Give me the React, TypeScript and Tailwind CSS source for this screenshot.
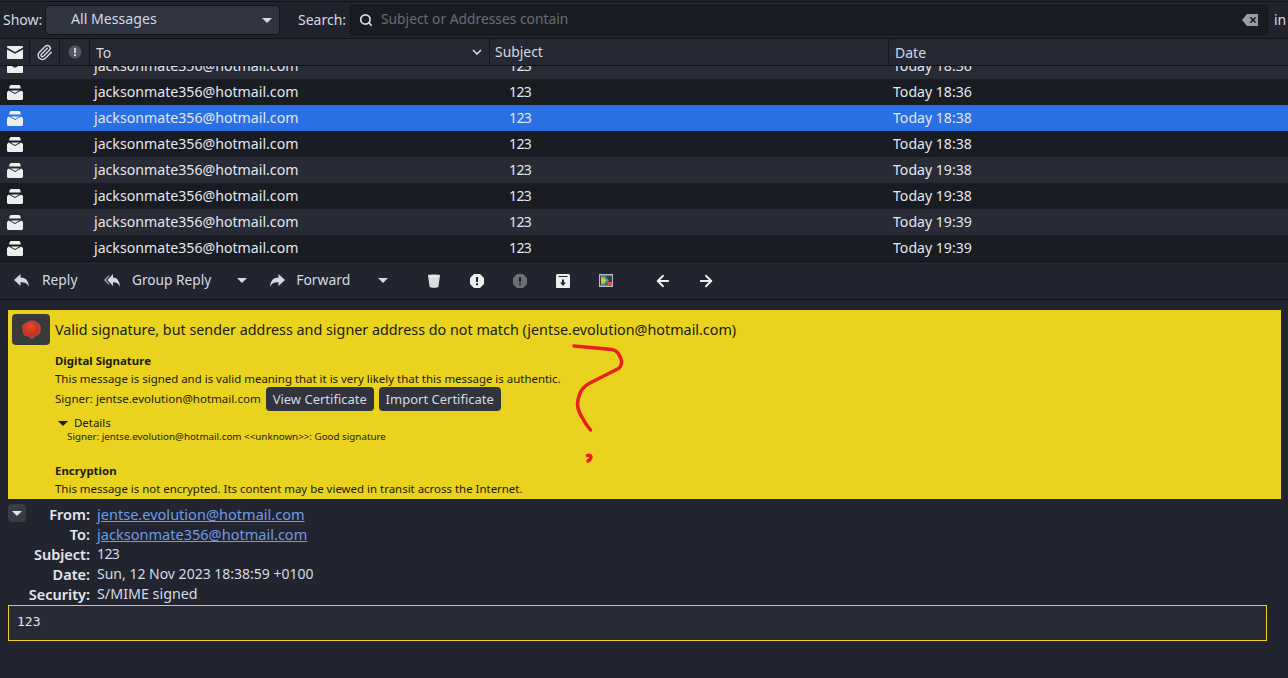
import { ArrowLeft, ArrowRight, Paperclip, Search } from 'lucide-react';

const messages = [
  { date: 'Today 18:36', tone: 'bg-[#282b36]', closed: true },
  { date: 'Today 18:36', tone: 'bg-[#191c23]' },
  { date: 'Today 18:38', tone: 'bg-[#2970e4]' },
  { date: 'Today 18:38', tone: 'bg-[#191c23]' },
  { date: 'Today 19:38', tone: 'bg-[#282b36]' },
  { date: 'Today 19:38', tone: 'bg-[#191c23]' },
  { date: 'Today 19:39', tone: 'bg-[#282b36]' },
  { date: 'Today 19:39', tone: 'bg-[#191c23]' },
];

function Caret({ className = 'fill-[#d3dae3]' }: { className?: string }) {
  return (
    <svg width="10" height="5" viewBox="0 0 10 5" className={className}>
      <path d="M0 0h10L5 5z" />
    </svg>
  );
}

function ClosedMail() {
  return (
    <svg width="16" height="13" viewBox="0 0 16 13" className="fill-[#eeeeee]">
      <path d="M1 0h14c.6 0 1 .4 1 1v.6L8 6 0 1.600V1c0-.6.4-1 1-1zM0 3.400l8 4.400 8-4.400V12c0 .6-.4 1-1 1H1c-.6 0-1-.4-1-1z" />
    </svg>
  );
}

function ReadMail() {
  return (
    <svg width="16" height="15" viewBox="0 0 16 15" className="fill-[#eeeeee]">
      <path d="M4.500 0h7c1 0 1.800.7 2 1.700L13.800 3.500H2.200L2.500 1.700C2.700.7 3.500 0 4.500 0z" />
      <path d="M0 7 1.800 5.500 8 9l6.200-3.500L16 7v6.500c0 .8-.7 1.500-1.500 1.500h-13C.7 15 0 14.300 0 13.500z" />
      <path d="M3.500 5.500h9L8 8z" />
    </svg>
  );
}

function ReplyIcon({ flip = false }: { flip?: boolean }) {
  return (
    <svg width="15" height="13" viewBox="0 0 15 13" className={`fill-[#d3dae3] ${flip ? '-scale-x-100' : ''}`}>
      <path d="M6.500 0v3.500c5 0 8 3 8.500 9.500-1.500-3.500-4-4.800-8.500-4.800V12L0 6z" />
    </svg>
  );
}

function GroupReplyIcon() {
  return (
    <svg width="16" height="13" viewBox="0 0 16 13" className="fill-[#d3dae3]">
      <path d="M9 0v3.500c4 0 6.500 3 7 9.500-1.300-3.500-3.500-4.800-7-4.800V12L3.500 6z" />
      <path d="M5 1 0 6l5 5V9.500L2 6l3-3.500z" opacity=".75" />
    </svg>
  );
}

function Seal() {
  return (
    <svg width="22" height="22" viewBox="0 0 22 22">
      <defs>
        <radialGradient id="wax" cx="0.45" cy="0.35" r="0.7">
          <stop offset="0" stopColor="#e8452a" />
          <stop offset="1" stopColor="#c02c18" />
        </radialGradient>
      </defs>
      <path d="M7 3C9.500 1.500 13 1 15.500 2.200 18 3.300 20.300 5 20.700 8c.3 2 .3 3.500-.5 5.500-.8 2-2.800 2.600-4.500 3.700-1.300.9-2.300 3-4 2.800-1.300-.2-1.700-1.800-3.200-2.300-2-.6-3.800-.6-5-2.500-.9-1.500-.5-3-1-4.500C2 8.700 1.300 7.300 2.700 5.800 4 4.400 5.500 4 7 3z" fill="#9c5246" />
      <ellipse cx="11.300" cy="10" rx="8" ry="7.500" fill="url(#wax)" />
    </svg>
  );
}

function ActionIcon({ kind }: { kind: string }) {
  if (kind === 'trash') {
    return (
      <svg width="14" height="14" viewBox="0 0 14 14">
        <path d="M1 1C3 .2 11 .2 13 1L11.500 12.500c-.3 1.800-8.700 1.800-9 0z" fill="#dcdcdc" />
        <path d="M1.500 2c3 .8 8 .8 11 0" stroke="#f2f2f2" strokeWidth="1" fill="none" />
      </svg>
    );
  }
  if (kind === 'junk' || kind === 'notjunk') {
    return (
      <svg width="14" height="14" viewBox="0 0 14 14">
        <path
          d="M4 0h6l4 4v6l-4 4H4l-4-4V4zM6 3v5h2V3zM6 9.200v2h2v-2z"
          fillRule="evenodd"
          fill={kind === 'junk' ? '#eeeeee' : '#6f7076'}
        />
      </svg>
    );
  }
  if (kind === 'archive') {
    return (
      <svg width="14" height="14" viewBox="0 0 14 14">
        <path d="M1.500 0h11c.8 0 1.500.7 1.500 1.500V13c0 .6-.4 1-1 1H1c-.6 0-1-.4-1-1V1.500C0 .7.700 0 1.500 0zM2.500 2v1h9V2zM6 5.500v3H4L7 12l3-3.500H8v-3z" fillRule="evenodd" fill="#eeeeee" />
      </svg>
    );
  }
  return (
    <svg width="14" height="13" viewBox="0 0 14 13">
      <rect width="14" height="13" fill="#b9bcc4" />
      <rect x="1" y="1.500" width="12" height="10" fill="#3a3d46" />
      <path d="M2 2h4l4 4.500L6 11H2z" fill="#26a69a" />
      <path d="M2 3.500h2.500L7.500 6.500 4.500 9.500H2z" fill="#f0b429" />
      <path d="M9 8h4v3.500H7z" fill="#e5484d" />
    </svg>
  );
}

export default function App() {
  return (
    <div className="flex h-[678px] w-[1288px] flex-col overflow-hidden bg-[#22252f] font-['Noto_Sans',sans-serif] text-[14px] text-[#d3dae3]">
      {/* filter bar */}
      <div className="mt-[1px] flex h-[38px] shrink-0 items-center border-y border-[#111318] bg-[#20232c]">
        <span className="mb-[2px] ml-[3px] w-[42px]">Show:</span>
        <div className="flex h-[30px] w-[235px] items-center justify-between rounded-[4px] border border-[#14161c] bg-[#303340] pl-[25px] pr-[7px]">
          <span className="mb-[2px] text-[14.150px]">All Messages</span>
          <Caret />
        </div>
        <span className="mb-[2px] ml-[18px] w-[52px]">Search:</span>
        <div className="flex h-[30px] w-[918px] items-center rounded-[4px] border border-[#111318] bg-[#1a1c23] pl-[8px] pr-[9px]">
          <Search size={14} strokeWidth={3} className="text-[#d3dae3]" />
          <span className="mb-[2px] ml-[8px] text-[13.800px] text-[#6a6d76]">Subject or Addresses contain</span>
          <svg width="16" height="12" viewBox="0 0 16 12" className="ml-auto fill-[#9b9da3]">
            <path d="M5 0h11v12H5L0 6zM7.500 3.200 9.800 6 7.500 8.800h2L11 7l1.500 1.800h2L12.200 6l2.300-2.800h-2L11 5 9.500 3.200z" fillRule="evenodd" />
          </svg>
        </div>
        <span className="mb-[2px] ml-[6px]">in</span>
      </div>

      {/* column headers */}
      <div className="flex h-[27px] shrink-0 items-center border-b border-[#111318] bg-[#262933]">
        <div className="flex h-full w-[30px] items-center justify-center border-r border-[#15171d]">
          <ClosedMail />
        </div>
        <div className="flex h-full w-[30px] items-center justify-center border-r border-[#15171d]">
          <Paperclip size={17} className="text-[#d3dae3]" />
        </div>
        <div className="flex h-full w-[30px] items-center justify-center border-r border-[#15171d]">
          <svg width="14" height="14" viewBox="0 0 14 14">
            <circle cx="7" cy="7" r="6.500" fill="#555862" />
            <path d="M6 3h2v5H6zM6 9h2v2H6z" fill="#cfd1d6" />
          </svg>
        </div>
        <div className="flex h-full w-[400px] items-center justify-between border-r border-[#15171d] pl-[6px] pr-[7px]">
          <span>To</span>
          <svg width="10" height="6" viewBox="0 0 10 6" fill="none" stroke="#d3dae3" strokeWidth="1.500">
            <path d="M1 1l4 4 4-4" />
          </svg>
        </div>
        <div className="flex h-full w-[399px] items-center border-r border-[#15171d] pl-[5px] text-[13.900px]">Subject</div>
        <div className="flex h-full items-center pl-[6px]">Date</div>
      </div>

      {/* message list, scrolled so the first row is cut off */}
      <div className="flex h-[195px] shrink-0 flex-col justify-end overflow-hidden">
        {messages.map((m, i) => (
          <div key={i} className={`flex h-[26px] shrink-0 items-center text-[#e4e7ec] ${m.tone}`}>
            <div className="flex w-[30px] justify-center">{m.closed ? <ClosedMail /> : <ReadMail />}</div>
            <div className="w-[64px]" />
            <div className="mb-[1px] w-[415px] text-[14.150px]">jacksonmate356@hotmail.com</div>
            <div className="mb-[1px] w-[384px] tracking-[-0.6px]">123</div>
            <div className="mb-[1px] text-[14.100px]">{m.date}</div>
          </div>
        ))}
      </div>

      {/* message actions */}
      <div className="flex h-[39px] shrink-0 items-center border-y border-[#111318] bg-[#22252f]">
        <div className="ml-[14px] flex w-[90px] items-center">
          <ReplyIcon />
          <span className="mb-[1px] ml-[13px] text-[13.800px]">Reply</span>
        </div>
        <GroupReplyIcon />
        <span className="mb-[1px] ml-[12px] text-[13.700px]">Group Reply</span>
        <Caret className="ml-[26px] fill-[#d3dae3]" />
        <div className="ml-[23px]">
          <ReplyIcon flip />
        </div>
        <span className="mb-[1px] ml-[11px] text-[13.900px]">Forward</span>
        <Caret className="ml-[28px] fill-[#d3dae3]" />
        <div className="ml-[39px] flex w-[186px] items-center justify-between">
          <ActionIcon kind="trash" />
          <ActionIcon kind="junk" />
          <ActionIcon kind="notjunk" />
          <ActionIcon kind="archive" />
          <ActionIcon kind="other" />
        </div>
        <ArrowLeft size={18} strokeWidth={2.500} className="ml-[41px] text-[#eeeeee]" />
        <ArrowRight size={18} strokeWidth={2.500} className="ml-[25px] text-[#eeeeee]" />
      </div>

      {/* signature banner */}
      <div className="relative mx-[8px] mt-[10px] h-[189px] w-[1273px] shrink-0 bg-[#e9d31f] pl-[4px] pt-[4px] text-[#1c1a08]">
        <div className="flex items-center">
          <div className="flex h-[31px] w-[38px] items-center justify-center rounded-[4px] bg-[#3a3a3a]">
            <Seal />
          </div>
          <span className="ml-[5px] text-[14.330px] leading-[20px]">
            Valid signature, but sender address and signer address do not match (jentse.evolution@hotmail.com)
          </span>
        </div>
        <div className="ml-[43px] mt-[7px] text-[11.450px] leading-[18px]">
          <div className="font-bold">Digital Signature</div>
          <div>This message is signed and is valid meaning that it is very likely that this message is authentic.</div>
          <div className="mt-[-1px] flex h-[24px] items-center">
            <span className="text-[11.550px]">Signer: jentse.evolution@hotmail.com</span>
            <span className="ml-[5px] flex h-[24px] w-[108px] items-center justify-center rounded-[4px] bg-[#31343c] text-[13px] text-[#d3dae3]">
              View Certificate
            </span>
            <span className="ml-[5px] flex h-[24px] w-[122px] items-center justify-center rounded-[4px] bg-[#31343c] text-[13px] text-[#d3dae3]">
              Import Certificate
            </span>
          </div>
          <div className="ml-[3px] mt-[3px] flex h-[18px] items-center">
            <Caret className="fill-[#1c1a08]" />
            <span className="ml-[6px]">Details</span>
          </div>
          <div className="ml-[12px] text-[9.800px] leading-[10px]">
            Signer: jentse.evolution@hotmail.com &lt;&lt;unknown&gt;&gt;: Good signature
          </div>
          <div className="mt-[20px] font-bold">Encryption</div>
          <div>This message is not encrypted. Its content may be viewed in transit across the Internet.</div>
        </div>
        {/* hand drawn question mark on the screenshot */}
        <svg width="60" height="125" viewBox="0 0 60 125" fill="none" className="absolute left-[561px] top-[34px]">
          <path
            d="M5 2 43 5.500C46 6 47.500 7 49 9 51.500 13 53 16 52.500 19 52 22 51 23.500 49.500 24.500L20 39.500C16 42 13 45 11.500 48 9.500 53 8.500 57 8.500 61 9 67 11 70 13.500 74 16 79 19 83 21.500 86"
            stroke="#ea2020"
            strokeWidth="3.500"
            strokeLinecap="round"
            strokeLinejoin="round"
          />
          <path d="M18.500 111.500c2-.5 3.500.5 3.500 1.500 0 1.500-1.500 3-3 4" stroke="#ea2020" strokeWidth="3.500" strokeLinecap="round" />
        </svg>
      </div>

      {/* mail headers */}
      <div className="relative h-[106px] shrink-0 pt-[5px] text-[14px] leading-[20px]">
        <div className="absolute left-[8px] top-[5px] flex h-[18px] w-[18px] items-center justify-center rounded-[4px] bg-[#3a3c44]">
          <Caret className="fill-[#e4e4e4]" />
        </div>
        {[
          ['From:', 'jentse.evolution@hotmail.com', true, 'text-[14.560px]'],
          ['To:', 'jacksonmate356@hotmail.com', true, 'text-[14.550px]'],
          ['Subject:', '123', false, 'tracking-[-0.6px]'],
          ['Date:', 'Sun, 12 Nov 2023 18:38:59 +0100', false, 'text-[14px]'],
          ['Security:', 'S/MIME signed', false, 'text-[14.300px]'],
        ].map(([label, value, link, size]) => (
          <div key={label as string} className="flex h-[20px]">
            <div className="w-[90px] text-right text-[14.500px] font-semibold text-[#e4e7ec]">{label}</div>
            <div className={`ml-[7px] ${size} ${link ? 'text-[#6d9ce8] underline' : 'text-[#d3dae3]'}`}>{value}</div>
          </div>
        ))}
      </div>

      {/* body */}
      <div className="ml-[8px] flex h-[36px] w-[1259px] shrink-0 items-center border border-[#e9d31f] bg-[#282a35] pb-[2px] pl-[8px] font-['DejaVu_Sans_Mono',monospace] text-[13px] text-[#e4e7ec]">
        123
      </div>
    </div>
  );
}
